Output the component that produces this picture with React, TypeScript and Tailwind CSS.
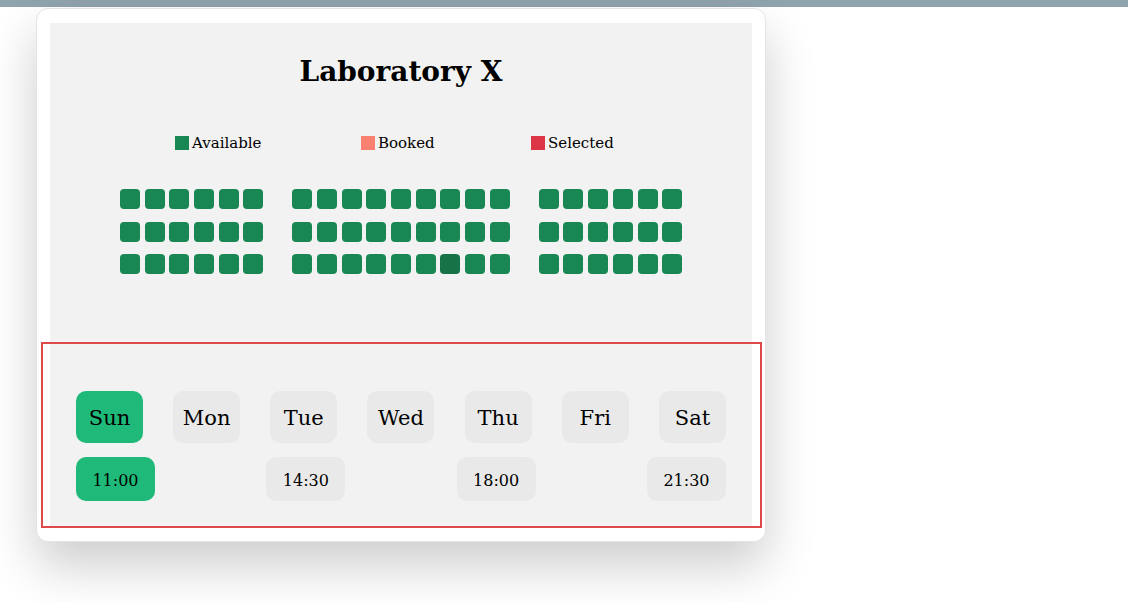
import React, { useState } from 'react';

const days = ['Sun', 'Mon', 'Tue', 'Wed', 'Thu', 'Fri', 'Sat'];
const times = ['11:00', '14:30', '18:00', '21:30'];

// seat blocks: number of seats per row in each block
const blocks = [6, 9, 6];
const rows = 3;

function Seat({ dark }: { dark?: boolean }) {
  return (
    <div
      className={`w-5 h-5 rounded-[4px] ${dark ? 'bg-[#167347]' : 'bg-[#198754]'}`}
    />
  );
}

function Legend() {
  return (
    <div className="flex pl-[125px] text-[15px] leading-5 text-black">
      <div className="w-[186px] flex items-center gap-[3px]">
        <span className="w-[14px] h-[14px] bg-[#198754]" />
        Available
      </div>
      <div className="w-[170px] flex items-center gap-[3px]">
        <span className="w-[14px] h-[14px] bg-[#fa8072]" />
        Booked
      </div>
      <div className="flex items-center gap-[3px]">
        <span className="w-[14px] h-[14px] bg-[#dc3545]" />
        Selected
      </div>
    </div>
  );
}

export default function App() {
  const [day, setDay] = useState('Sun');
  const [time, setTime] = useState('11:00');

  return (
    <div
      className="min-h-screen bg-white"
      style={{ fontFamily: '"DejaVu Serif", "Liberation Serif", serif' }}
    >
      <div className="h-[7px] bg-[#90a4ae]" />
      <div className="pl-[36px] pt-[1px]">
        <div className="w-[730px] rounded-xl bg-white border border-[#e4e4e4] shadow-[0_24px_50px_rgba(0,0,0,0.2)] px-[13px] pt-[14px] pb-[13px]">
          {/* seat map */}
          <div className="bg-[#f2f2f2] h-[319px] pt-[29px]">
            <h1 className="text-center text-[28px] leading-[40px] font-bold text-black">
              Laboratory X
            </h1>
            <div className="mt-[41px]">
              <Legend />
            </div>
            <div className="mt-[36px] flex justify-center gap-[29px]">
              {blocks.map((count, b) => (
                <div key={b} className="flex flex-col gap-[12.5px]">
                  {Array.from({ length: rows }).map((_, r) => (
                    <div key={r} className="flex gap-[4.7px]">
                      {Array.from({ length: count }).map((_, s) => (
                        <Seat key={s} dark={b === 1 && r === 2 && s === 6} />
                      ))}
                    </div>
                  ))}
                </div>
              ))}
            </div>
          </div>

          {/* day + time picker */}
          <div className="-ml-[9px] -mr-[10px] border-2 border-[#dc4a4a] pl-[7px] pr-[8px]">
            <div className="bg-[#f2f2f2] px-[26px] pt-[47px] pb-[25px]">
              <div className="flex justify-between">
                {days.map((d) => (
                  <button
                    key={d}
                    onClick={() => setDay(d)}
                    className={`w-[67px] h-[52px] pt-[3px] rounded-[10px] text-[21px] text-black ${
                      day === d ? 'bg-[#1fba7a]' : 'bg-[#e9e9e9]'
                    }`}
                  >
                    {d}
                  </button>
                ))}
              </div>
              <div className="mt-[14px] flex justify-between">
                {times.map((t) => (
                  <button
                    key={t}
                    onClick={() => setTime(t)}
                    className={`w-[79px] h-[44px] pt-[3px] rounded-[10px] text-[16px] text-black ${
                      time === t ? 'bg-[#1fba7a]' : 'bg-[#e9e9e9]'
                    }`}
                  >
                    {t}
                  </button>
                ))}
              </div>
            </div>
          </div>
        </div>
      </div>
    </div>
  );
}
